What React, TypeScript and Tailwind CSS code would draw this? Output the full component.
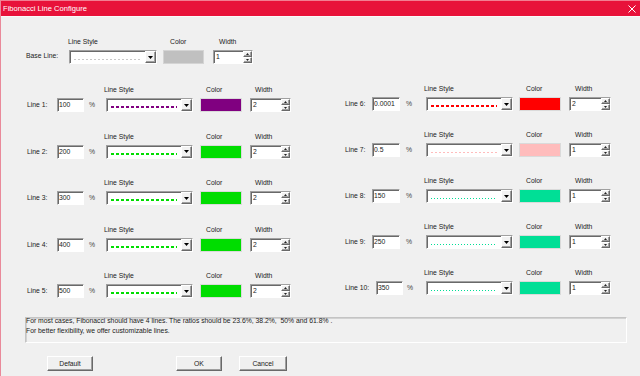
import React from "react";

const SUNKEN =
  "border border-t-[#a0a0a0] border-l-[#a0a0a0] border-r-white border-b-white shadow-[inset_1px_1px_0_#696969]";
const RAISED =
  "border border-t-white border-l-white border-r-[#696969] border-b-[#696969] shadow-[inset_-1px_-1px_0_#a0a0a0]";

type LineCfg = {
  label: string;
  value: string;
  width: string;
  swatch: string;
  stroke: string;
  dash: string;
  sw: number;
  labelW: string;
  inputW: string;
  pctW: string;
};

const G = "#00dd00";
const T = "#00df96";

const leftLines: LineCfg[] = [
  { label: "Line 1:", value: "100", width: "2", swatch: "bg-[#800080]", stroke: "#800080", dash: "3 2", sw: 2, labelW: "w-[30px]", inputW: "w-[27px]", pctW: "w-[22px] pl-[5px]" },
  { label: "Line 2:", value: "200", width: "2", swatch: "bg-[#00dd00]", stroke: G, dash: "3 2", sw: 2, labelW: "w-[30px]", inputW: "w-[27px]", pctW: "w-[22px] pl-[5px]" },
  { label: "Line 3:", value: "300", width: "2", swatch: "bg-[#00dd00]", stroke: G, dash: "3 2", sw: 2, labelW: "w-[30px]", inputW: "w-[27px]", pctW: "w-[22px] pl-[5px]" },
  { label: "Line 4:", value: "400", width: "2", swatch: "bg-[#00dd00]", stroke: G, dash: "3 2", sw: 2, labelW: "w-[30px]", inputW: "w-[27px]", pctW: "w-[22px] pl-[5px]" },
  { label: "Line 5:", value: "500", width: "2", swatch: "bg-[#00dd00]", stroke: G, dash: "3 2", sw: 2, labelW: "w-[30px]", inputW: "w-[27px]", pctW: "w-[22px] pl-[5px]" },
];

const rightLines: LineCfg[] = [
  { label: "Line 6:", value: "0.0001", width: "2", swatch: "bg-[#ff0000]", stroke: "#ff0000", dash: "3 2", sw: 2, labelW: "w-[27px]", inputW: "w-[28px]", pctW: "w-[26px] pl-[6px]" },
  { label: "Line 7:", value: "0.5", width: "1", swatch: "bg-[#ffbcbc]", stroke: "#ffbcbc", dash: "2 2", sw: 1, labelW: "w-[27px]", inputW: "w-[28px]", pctW: "w-[26px] pl-[6px]" },
  { label: "Line 8:", value: "150", width: "1", swatch: "bg-[#00df96]", stroke: T, dash: "1 2", sw: 1, labelW: "w-[27px]", inputW: "w-[28px]", pctW: "w-[26px] pl-[6px]" },
  { label: "Line 9:", value: "250", width: "1", swatch: "bg-[#00df96]", stroke: T, dash: "1 2", sw: 1, labelW: "w-[27px]", inputW: "w-[28px]", pctW: "w-[26px] pl-[6px]" },
  { label: "Line 10:", value: "350", width: "1", swatch: "bg-[#00df96]", stroke: T, dash: "1 2", sw: 1, labelW: "w-[31px]", inputW: "w-[27px]", pctW: "w-[23px] pl-[4px]" },
];

function DownArrow() {
  return (
    <svg width="5" height="3" viewBox="0 0 5 3">
      <path d="M0 0h5L2.5 3z" fill="#000" />
    </svg>
  );
}

function TinyArrow({ up }: { up?: boolean }) {
  return (
    <svg width="3" height="2" viewBox="0 0 3 2">
      <path d={up ? "M1.5 0L3 2H0z" : "M0 0h3L1.5 2z"} fill="#222" />
    </svg>
  );
}

function Combo({ w, stroke, dash, sw }: { w: string; stroke: string; dash: string; sw: number }) {
  return (
    <div className={`${w} flex h-[14px] bg-white ${SUNKEN}`}>
      <div className="flex flex-1 items-start pl-[4px] pt-[7px]">
        <svg width="66" height="2" viewBox="0 0 66 2">
          <line
            x1="0"
            y1={sw === 2 ? 1 : 1.5}
            x2="66"
            y2={sw === 2 ? 1 : 1.5}
            stroke={stroke}
            strokeWidth={sw}
            strokeDasharray={dash}
          />
        </svg>
      </div>
      <div className={`flex h-full w-[11px] items-center justify-center bg-[#f2f2f2] ${RAISED}`}>
        <DownArrow />
      </div>
    </div>
  );
}

function Spin({ w, v, extra }: { w: string; v: string; extra: string }) {
  return (
    <div className={`${w} ${extra} flex h-[14px] bg-white ${SUNKEN}`}>
      <div className="flex-1 pl-[2px] leading-[12px]">{v}</div>
      <div className="flex w-[9px] flex-col">
        <div className={`flex h-[6px] items-center justify-center bg-[#f0f0f0] ${RAISED}`}>
          <TinyArrow up />
        </div>
        <div className={`flex h-[6px] items-center justify-center bg-[#f0f0f0] ${RAISED}`}>
          <TinyArrow />
        </div>
      </div>
    </div>
  );
}

function LeftRow({ c }: { c: LineCfg }) {
  return (
    <div className="flex flex-col">
      <div className="flex h-[9px] leading-[9px]">
        <div className="w-[77px]" />
        <div className="w-[96px]">Line Style</div>
        <div className="w-[50px] pl-[6px]">Color</div>
        <div className="pl-[5px]">Width</div>
      </div>
      <div className="mt-[4px] flex h-[14px] items-center">
        <div className={`${c.labelW} leading-[12px]`}>{c.label}</div>
        <div className={`${c.inputW} h-[14px] bg-white pl-[1px] leading-[12px] ${SUNKEN}`}>{c.value}</div>
        <div className={`${c.pctW} leading-[12px] text-[#444]`}>%</div>
        <Combo w="w-[87px]" stroke={c.stroke} dash={c.dash} sw={c.sw} />
        <div className={`ml-[7px] h-[14px] w-[42px] border border-[#dadada] ${c.swatch}`} />
        <Spin w="w-[41px]" extra="ml-[8px]" v={c.width} />
      </div>
    </div>
  );
}

function RightRow({ c }: { c: LineCfg }) {
  return (
    <div className="flex flex-col">
      <div className="flex h-[9px] leading-[9px]">
        <div className="w-[79px]" />
        <div className="w-[95px]">Line Style</div>
        <div className="w-[50px] pl-[7px]">Color</div>
        <div className="pl-[6px]">Width</div>
      </div>
      <div className="mt-[4px] flex h-[14px] items-center">
        <div className={`${c.labelW} leading-[12px]`}>{c.label}</div>
        <div className={`${c.inputW} h-[14px] bg-white pl-[1px] leading-[12px] ${SUNKEN}`}>{c.value}</div>
        <div className={`${c.pctW} leading-[12px] text-[#444]`}>%</div>
        <Combo w="w-[87px]" stroke={c.stroke} dash={c.dash} sw={c.sw} />
        <div className={`ml-[6px] h-[14px] w-[42px] border border-[#dadada] ${c.swatch}`} />
        <Spin w="w-[42px]" extra="ml-[8px]" v={c.width} />
      </div>
    </div>
  );
}

function PushButton({ label, cls }: { label: string; cls: string }) {
  return (
    <div className={`${cls} flex h-[15px] items-center justify-center bg-[#f0f0f0] leading-[10px] ${RAISED}`}>
      {label}
    </div>
  );
}

export default function App() {
  return (
    <div className="flex h-[376px] w-[640px] flex-col overflow-hidden border-l border-l-[#e9899a] bg-[#f0f0f0] font-['Liberation_Sans',Arial,sans-serif] text-[6.8px] text-[#1a1a1a]">
      <div className="flex h-[17px] items-center justify-between border-t border-b border-t-[#f27e92] border-b-[#fafafa] bg-[#e8123a] pl-[2px] pr-[4px]">
        <span className="text-[7.6px] leading-[10px] text-white">Fibonacci Line Configure</span>
        <svg width="8" height="8" viewBox="0 0 8 8">
          <path d="M0.5 0.5L7.5 7.5M7.5 0.5L0.5 7.5" stroke="#fff" strokeWidth="1" />
        </svg>
      </div>

      <div className="flex flex-col pl-[25px] pt-[20px]">
        <div className="flex h-[9px] leading-[9px]">
          <div className="w-[42px]" />
          <div className="w-[95px]">Line Style</div>
          <div className="w-[50px] pl-[7px]">Color</div>
          <div className="pl-[6px]">Width</div>
        </div>
        <div className="mt-[4px] flex h-[14px] items-center">
          <div className="w-[43px] pb-[2px] leading-[12px]">Base Line:</div>
          <Combo w="w-[88px]" stroke="#c8c8c8" dash="2 2" sw={1} />
          <div className="ml-[6px] h-[14px] w-[41px] border border-[#d4d4d4] bg-[#c0c0c0]" />
          <Spin w="w-[40px]" extra="ml-[9px]" v="1" />
        </div>
      </div>

      <div className="mt-[20px] flex">
        <div className="flex w-[344px] flex-col gap-[19.5px] pl-[26px] pt-[1px]">
          {leftLines.map((c) => (
            <LeftRow key={c.label} c={c} />
          ))}
        </div>
        <div className="flex flex-col gap-[19px]">
          {rightLines.map((c) => (
            <RightRow key={c.label} c={c} />
          ))}
        </div>
      </div>

      <div className="ml-[24px] mt-[19px] h-[26px] w-[602px] border border-t-[#c4c4c4] border-l-[#c4c4c4] border-r-white border-b-white shadow-[inset_1px_1px_0_#d2d2d2]">
        <div className="-mt-[2px] leading-[10px] text-[#222]">
          <div>For most cases, Fibonacci should have 4 lines. The ratios should be 23.6%, 38.2%,&nbsp; 50% and 61.8% .</div>
          <div>For better flexibility, we offer customizable lines.</div>
        </div>
      </div>

      <div className="mt-[13px] flex pl-[46px]">
        <PushButton label="Default" cls="w-[46px]" />
        <PushButton label="OK" cls="ml-[83px] w-[46px]" />
        <PushButton label="Cancel" cls="ml-[17px] w-[48px]" />
      </div>
    </div>
  );
}
